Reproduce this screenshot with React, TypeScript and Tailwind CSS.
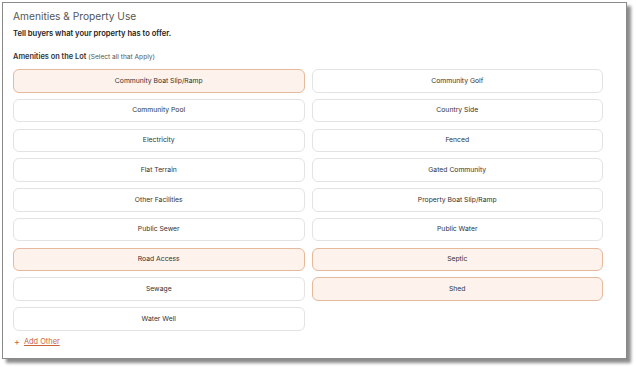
import React from "react";

const items: { label: string; sel: boolean }[] = [
  { label: "Community Boat Slip/Ramp", sel: true },
  { label: "Community Golf", sel: false },
  { label: "Community Pool", sel: false },
  { label: "Country Side", sel: false },
  { label: "Electricity", sel: false },
  { label: "Fenced", sel: false },
  { label: "Flat Terrain", sel: false },
  { label: "Gated Community", sel: false },
  { label: "Other Facilities", sel: false },
  { label: "Property Boat Slip/Ramp", sel: false },
  { label: "Public Sewer", sel: false },
  { label: "Public Water", sel: false },
  { label: "Road Access", sel: true },
  { label: "Septic", sel: true },
  { label: "Sewage", sel: false },
  { label: "Shed", sel: true },
  { label: "Water Well", sel: false },
];

export default function App() {
  return (
    <div className="w-[636px] h-[367px] bg-white pl-[2px] pt-[2px]" style={{ fontFamily: "Inter, 'Open Sans', sans-serif" }}>
      <div className="w-[625px] h-[357px] border border-[#8a8a8a] bg-white shadow-[4px_4px_3px_rgba(0,0,0,0.45)] pl-[10px] pr-[23px] pt-[5px]">
        <h1 className="text-[10.2px] leading-[16px] text-[#555] font-normal">Amenities &amp; Property Use</h1>
        <p className="mt-[4px] text-[7.6px] leading-[12px] font-semibold text-[#222]">Tell buyers what your property has to offer.</p>
        <p className="mt-[11px] text-[7.4px] leading-[12px] text-[#333]">
          <span className="font-semibold">Amenities on the Lot</span>{" "}
          <span className="text-[6.6px] text-[#555]">(Select all that Apply)</span>
        </p>
        <div className="mt-[6px] grid grid-cols-2 gap-x-[7px] gap-y-[6.25px]">
          {items.map((it) => (
            <div
              key={it.label}
              className={
                "h-[23.5px] rounded-[6px] border flex items-center justify-center text-[6.8px] text-[#333] " +
                (it.sel ? "bg-[#fdf2ec] border-[#e6b89c]" : "bg-white border-[#e3e3e3]")
              }
            >
              {it.label}
            </div>
          ))}
        </div>
        <div className="mt-[5px] flex items-center gap-[4px] pl-[1px] text-[7.4px] leading-[12px] text-[#c8643a]">
          <span className="text-[9px] leading-none">+</span>
          <span className="underline">Add Other</span>
        </div>
      </div>
    </div>
  );
}
